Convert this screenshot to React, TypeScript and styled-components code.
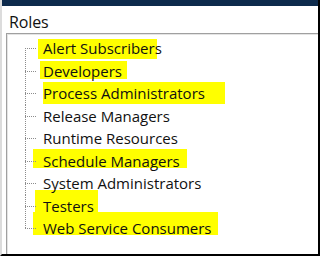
import React from "react";
import styled, { createGlobalStyle } from "styled-components";

const Global = createGlobalStyle`
  html, body { margin: 0; padding: 0; background: #ffffff; }
  body { width: 320px; height: 256px; overflow: hidden; }
`;

const Window = styled.div`
  box-sizing: border-box;
  width: 320px;
  height: 256px;
  display: flex;
  flex-direction: column;
  background: #ffffff;
  border-left: 2px solid #dcdcdc;
  border-right: 2px solid #000000;
  border-bottom: 2px solid #000000;
  overflow: hidden;
  font-family: "Open Sans", "Noto Sans", sans-serif;
  color: #111111;
`;

const TopBar = styled.div`
  height: 6px;
  flex: none;
  background: #0d2a4c;
  margin-left: -2px;
`;

const Title = styled.div`
  flex: none;
  height: 27px;
  padding: 7px 0 0 7px;
  box-sizing: border-box;
  font-size: 16px;
  line-height: 18px;
  letter-spacing: -0.1px;
`;

const Panel = styled.div`
  flex: 1;
  margin-left: 4px;
  border-top: 1px solid #a0a0a0;
  border-left: 1px solid #a0a0a0;
  box-shadow: inset 1px 1px 0 #e4e4e4;
  padding: 3px 0 0 18px;
`;

const Tree = styled.ul`
  list-style: none;
  margin: 0;
  padding: 0;
  isolation: isolate;
`;

const Row = styled.li`
  display: flex;
  align-items: center;
  height: 22.5px;
  font-size: 15px;
  white-space: nowrap;
`;

const Connector = styled.span<{ $first?: boolean; $last?: boolean }>`
  position: relative;
  align-self: stretch;
  flex: none;
  width: 12px;
  margin-right: 6px;
  &::before {
    content: "";
    position: absolute;
    left: 0;
    width: 1px;
    top: ${(p) => (p.$first ? "50%" : "0")};
    bottom: ${(p) => (p.$last ? "50%" : "0")};
    background: repeating-linear-gradient(to bottom, #8c8c8c 0 1px, transparent 1px 2px);
  }
  &::after {
    content: "";
    position: absolute;
    left: 0;
    right: 0;
    top: 50%;
    height: 1px;
    background: repeating-linear-gradient(to right, #8c8c8c 0 1px, transparent 1px 2px);
  }
`;

type Mark = { l: number; w: number; t: number; h: number };

const Label = styled.span<{ $mark?: Mark }>`
  position: relative;
  &::before {
    content: ${(p) => (p.$mark ? '""' : "none")};
    position: absolute;
    z-index: -1;
    left: ${(p) => p.$mark?.l ?? 0}px;
    width: ${(p) => p.$mark?.w ?? 0}px;
    top: calc(50% + ${(p) => p.$mark?.t ?? 0}px);
    height: ${(p) => p.$mark?.h ?? 0}px;
    background: #ffff00;
  }
`;

const TEXT_X = 43;

const items: { name: string; mark?: Mark; center: number }[] = [
  { name: "Alert Subscribers", center: 48.7, mark: { l: 38, w: 119, t: 39, h: 20 } },
  { name: "Developers", center: 70.3, mark: { l: 40, w: 87, t: 61, h: 18 } },
  { name: "Process Administrators", center: 92.7, mark: { l: 43, w: 182, t: 81, h: 22 } },
  { name: "Release Managers", center: 115 },
  { name: "Runtime Resources", center: 138 },
  { name: "Schedule Managers", center: 161, mark: { l: 33, w: 154, t: 149, h: 19 } },
  { name: "System Administrators", center: 184 },
  { name: "Testers", center: 206, mark: { l: 35, w: 63, t: 190, h: 22 } },
  { name: "Web Service Consumers", center: 228.5, mark: { l: 33, w: 185, t: 212, h: 23 } },
];

export default function App() {
  return (
    <>
      <Global />
      <Window>
        <TopBar />
        <Title>Roles</Title>
        <Panel>
          <Tree>
            {items.map((it, i) => {
              const m = it.mark
                ? { l: it.mark.l - TEXT_X, w: it.mark.w, t: it.mark.t - it.center, h: it.mark.h }
                : undefined;
              return (
                <Row key={it.name}>
                  <Connector $first={i === 0} $last={i === items.length - 1} />
                  <Label $mark={m}>{it.name}</Label>
                </Row>
              );
            })}
          </Tree>
        </Panel>
      </Window>
    </>
  );
}
